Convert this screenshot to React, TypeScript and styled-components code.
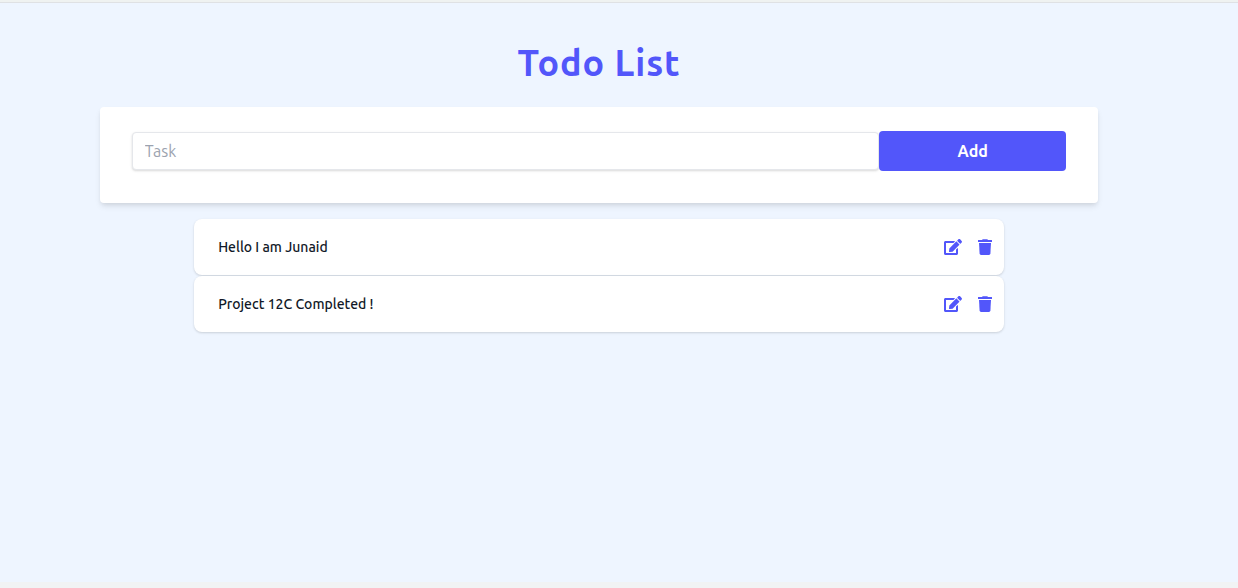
import React, { useState } from "react";
import styled, { createGlobalStyle } from "styled-components";
import { FaEdit } from "react-icons/fa";

const accent = "#5256fa";

const GlobalStyle = createGlobalStyle`
  *, *::before, *::after { box-sizing: border-box; }
  body {
    margin: 0;
    background: #eef5ff;
    color: #111827;
    font-family: Ubuntu, "Noto Sans", sans-serif;
    font-size: 16px;
    line-height: 24px;
  }
  button, input { font: inherit; }
`;

const Page = styled.div`
  min-height: 100vh;
  display: flex;
  flex-direction: column;
  border-top: 2px solid #eff2f1;
  border-bottom: 6px solid #f1f3f4;
`;

const Main = styled.main`
  flex: 1;
  display: flex;
  flex-direction: column;
  align-items: center;
  padding: 40px 40px 0 0;
  border-top: 1px solid #dfe1e4;
`;

const Title = styled.h1`
  margin: 0 0 24px;
  color: ${accent};
  font-size: 36px;
  line-height: 40px;
  font-weight: 700;
  letter-spacing: 0.025em;
`;

const AddForm = styled.form`
  width: calc(100% * 5 / 6);
  display: flex;
  align-items: center;
  padding: 24px 32px 32px;
  background: #fff;
  border-radius: 4px;
  box-shadow: 0 4px 6px -1px rgba(0, 0, 0, 0.1), 0 2px 4px -1px rgba(0, 0, 0, 0.06);
`;

const TaskInput = styled.input`
  width: 80%;
  height: 38px;
  padding: 0 12px;
  border: 1px solid #e5e7eb;
  border-radius: 4px;
  background: #fff;
  color: #374151;
  box-shadow: 0 1px 3px rgba(0, 0, 0, 0.1), 0 1px 2px rgba(0, 0, 0, 0.06);
  &::placeholder { color: #9ca3af; opacity: 1; }
`;

const AddButton = styled.button`
  width: 20%;
  height: 40px;
  padding: 0 16px;
  border: 0;
  border-radius: 4px;
  background: ${accent};
  color: #fff;
  font-weight: 700;
  cursor: pointer;
`;

const TaskList = styled.ul`
  width: calc(100% * 2 / 3 + 11px);
  display: flex;
  flex-direction: column;
  gap: 1px;
  margin: 16px 0 0;
  padding: 0;
  list-style: none;
`;

const TaskRow = styled.li`
  display: flex;
  align-items: center;
  gap: 16px;
  height: 56px;
  padding: 0 12px 0 24px;
  border-radius: 8px;
  background: #fff;
  box-shadow: 0 1px 3px rgba(0, 0, 0, 0.1), 0 1px 2px rgba(0, 0, 0, 0.06);
`;

const TaskName = styled.span`
  flex: 1;
  font-size: 14px;
  line-height: 20px;
  font-weight: 500;
`;

const IconButton = styled.button<{ $width: number }>`
  display: flex;
  padding: 0;
  border: 0;
  background: none;
  color: ${accent};
  cursor: pointer;
  svg {
    width: ${({ $width }) => $width}px;
    height: 16px;
  }
`;

const TrashIcon = () => (
  <svg viewBox="0 0 14 16" fill="currentColor" aria-hidden="true">
    <path d="M4.6 .3H9.4L9.9 1H13.7Q14 1 14 1.3V3H0V1.3Q0 1 .3 1H4.1Z" />
    <path d="M1 4H13L12.4 14.6Q12.3 16 10.9 16H3.1Q1.7 16 1.6 14.6Z" />
  </svg>
);

export default function App() {
  const [tasks, setTasks] = useState(["Hello I am Junaid", "Project 12C Completed !"]);
  const [draft, setDraft] = useState("");

  const addTask = (event: React.FormEvent) => {
    event.preventDefault();
    if (!draft.trim()) return;
    setTasks([...tasks, draft.trim()]);
    setDraft("");
  };

  const removeTask = (index: number) => setTasks(tasks.filter((_, i) => i !== index));

  const editTask = (index: number) => {
    setDraft(tasks[index]);
    removeTask(index);
  };

  return (
    <Page>
      <GlobalStyle />
      <Main>
        <Title>Todo List</Title>
        <AddForm onSubmit={addTask}>
          <TaskInput
            type="text"
            aria-label="Task"
            placeholder="Task"
            value={draft}
            onChange={(event) => setDraft(event.target.value)}
          />
          <AddButton type="submit">Add</AddButton>
        </AddForm>
        <TaskList>
          {tasks.map((task, index) => (
            <TaskRow key={task}>
              <TaskName>{task}</TaskName>
              <IconButton type="button" $width={18} aria-label={`Edit ${task}`} onClick={() => editTask(index)}>
                <FaEdit />
              </IconButton>
              <IconButton type="button" $width={14} aria-label={`Delete ${task}`} onClick={() => removeTask(index)}>
                <TrashIcon />
              </IconButton>
            </TaskRow>
          ))}
        </TaskList>
      </Main>
    </Page>
  );
}
